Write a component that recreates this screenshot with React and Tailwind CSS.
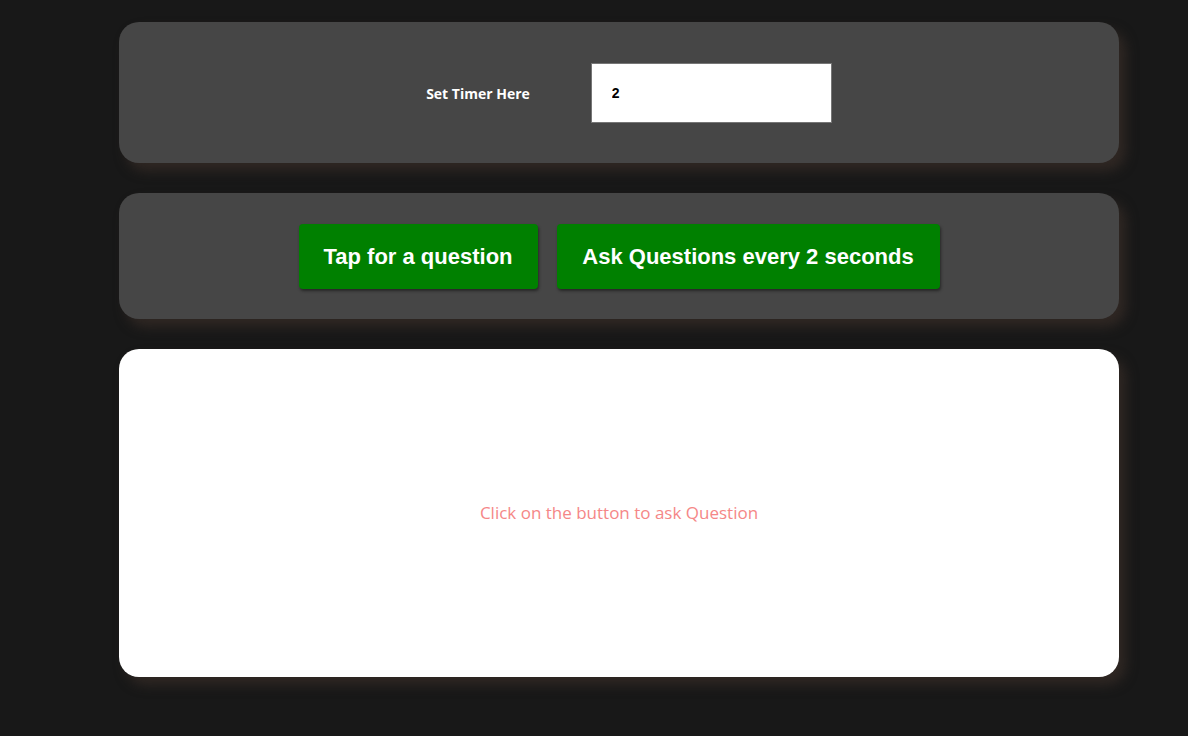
export default function App() {
  return (
    <div className="min-h-[736px] bg-[#181818] pt-[22px] pb-10" style={{ fontFamily: '"Open Sans", sans-serif' }}>
      <div className="ml-[119px] flex w-[1000px] flex-col gap-[30px]">
        <section className="flex items-center justify-center gap-[61px] rounded-[20px] bg-[#464646] pt-[41px] pb-[40px] pl-[20px] shadow-[7px_8px_12px_rgba(48,40,36,0.95)]">
          <label className="text-[14px] font-bold text-white">Set Timer Here</label>
          <input
            type="text"
            defaultValue="2"
            className="h-[60px] w-[241px] border border-[#767676] bg-white px-5 text-[14px] font-bold text-black outline-none"
            style={{ fontFamily: '"Liberation Sans", Arial, sans-serif' }}
          />
        </section>

        <section className="flex items-center justify-center gap-[19px] rounded-[20px] bg-[#464646] pt-[31px] pb-[30px] shadow-[7px_8px_12px_rgba(48,40,36,0.95)]">
          <button className="h-[65px] w-[239px] rounded-[4px] bg-[#008000] text-[22px] font-bold text-white shadow-[1px_2px_3px_rgba(0,0,0,0.45)] font-['Liberation_Sans',Arial,sans-serif]">
            Tap for a question
          </button>
          <button className="h-[65px] w-[383px] rounded-[4px] bg-[#008000] text-[22px] font-bold text-white shadow-[1px_2px_3px_rgba(0,0,0,0.45)] font-['Liberation_Sans',Arial,sans-serif]">
            Ask Questions every 2 seconds
          </button>
        </section>

        <section className="flex h-[328px] items-center justify-center rounded-[20px] bg-white shadow-[7px_8px_12px_rgba(48,40,36,0.95)]">
          <p className="text-[17px] text-[#f58787]">Click on the button to ask Question</p>
        </section>
      </div>
    </div>
  );
}
